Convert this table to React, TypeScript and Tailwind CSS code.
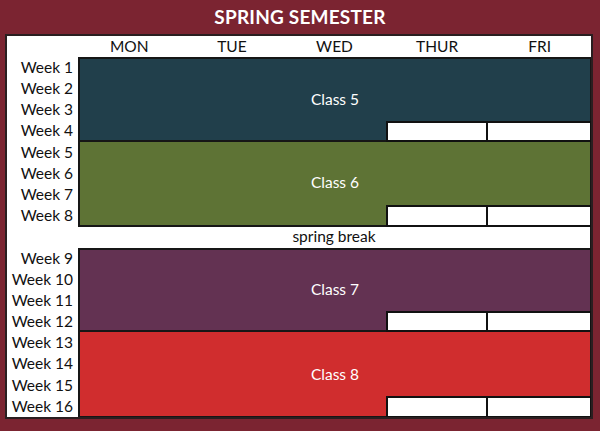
import React from "react";

const weeks: { label: string; cls: string }[] = [
  { label: "Week 1", cls: "row-start-2" },
  { label: "Week 2", cls: "row-start-3" },
  { label: "Week 3", cls: "row-start-4" },
  { label: "Week 4", cls: "row-start-5" },
  { label: "Week 5", cls: "row-start-6" },
  { label: "Week 6", cls: "row-start-7" },
  { label: "Week 7", cls: "row-start-8" },
  { label: "Week 8", cls: "row-start-9" },
  { label: "Week 9", cls: "row-start-11" },
  { label: "Week 10", cls: "row-start-12" },
  { label: "Week 11", cls: "row-start-13" },
  { label: "Week 12", cls: "row-start-14" },
  { label: "Week 13", cls: "row-start-15" },
  { label: "Week 14", cls: "row-start-16" },
  { label: "Week 15", cls: "row-start-17" },
  { label: "Week 16", cls: "row-start-18" },
];

const days = ["MON", "TUE", "WED", "THUR", "FRI"];

export default function App() {
  return (
    <div
      className="w-[600px] h-[431px] bg-[#7b2431] flex flex-col"
      style={{ fontFamily: "Lato, 'Open Sans', sans-serif" }}
    >
      <div className="h-[34px] flex items-center justify-center text-white font-bold text-[19px] tracking-[0.2px]">
        SPRING SEMESTER
      </div>
      <div className="ml-[5px] w-[588px] border-2 border-[#2a1e20] bg-white grid grid-cols-[71px_repeat(5,1fr)] grid-rows-[21px_repeat(17,21.2px)] text-[15.5px] text-[#111] leading-none">
        <div className="col-start-1 row-start-1" />
        {days.map((d) => (
          <div key={d} className="row-start-1 flex items-center justify-center">
            {d}
          </div>
        ))}
        {weeks.map((w) => (
          <div
            key={w.label}
            className={`col-start-1 ${w.cls} flex items-center justify-end pr-[5px]`}
          >
            {w.label}
          </div>
        ))}

        <div className="col-start-2 col-span-5 row-start-2 row-span-4 bg-[#213f4b] border-l-2 border-t-2 border-b-2 border-r border-[#161616] flex items-center justify-center text-white">
          Class 5
        </div>
        <div className="col-start-5 row-start-5 bg-white border-2 border-[#111]" />
        <div className="col-start-6 row-start-5 bg-white border-y-2 border-r border-[#111]" />

        <div className="col-start-2 col-span-5 row-start-6 row-span-4 bg-[#5e7335] border-l-2 border-b-2 border-r border-[#161616] flex items-center justify-center text-white">
          Class 6
        </div>
        <div className="col-start-5 row-start-9 bg-white border-2 border-[#111]" />
        <div className="col-start-6 row-start-9 bg-white border-y-2 border-r border-[#111]" />

        <div className="col-start-2 col-span-5 row-start-10 bg-white border-r border-[#161616] flex items-center justify-center">
          spring break
        </div>

        <div className="col-start-2 col-span-5 row-start-11 row-span-4 bg-[#633252] border-l-2 border-t-2 border-b-2 border-r border-[#161616] flex items-center justify-center text-white">
          Class 7
        </div>
        <div className="col-start-5 row-start-14 bg-white border-2 border-[#111]" />
        <div className="col-start-6 row-start-14 bg-white border-y-2 border-r border-[#111]" />

        <div className="col-start-2 col-span-5 row-start-15 row-span-4 bg-[#d02d2e] border-l-2 border-b border-r border-[#161616] flex items-center justify-center text-white">
          Class 8
        </div>
        <div className="col-start-5 row-start-18 bg-white border-2 border-b border-[#111]" />
        <div className="col-start-6 row-start-18 bg-white border-t-2 border-b border-r border-[#111]" />
      </div>
    </div>
  );
}
